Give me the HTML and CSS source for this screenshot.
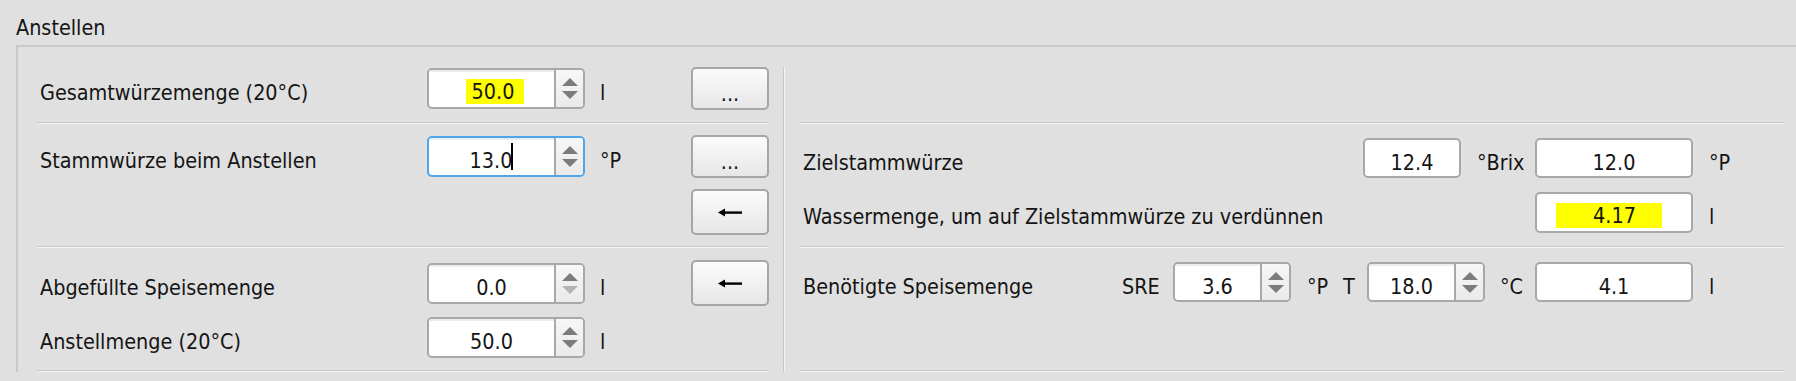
FILE: index.html
```html
<!DOCTYPE html>
<html lang="de">
<head>
    <meta charset="UTF-8">
    <title>Anstellen</title>
    <link rel="stylesheet" href="styles.css">
</head>
<body>

    <div class="title">Anstellen</div>

    <div class="group">
        <!-- left column -->
        <div class="left">
            <div class="sec-a">
                <div class="row">
                    <span class="label">Gesamtwürzemenge (20°C)</span>
                    <div class="spin">
                        <span class="val"><span class="hl">50.0</span></span>
                        <span class="arrows"><i class="up"></i><i class="down"></i></span>
                    </div>
                    <span class="unit">l</span>
                    <button class="btn dots">...</button>
                </div>
            </div>
            <div class="sep"></div>

            <div class="sec-b">
                <div class="row">
                    <span class="label">Stammwürze beim Anstellen</span>
                    <div class="spin focus">
                        <span class="val">13.0<span class="caret"></span></span>
                        <span class="arrows"><i class="up"></i><i class="down"></i></span>
                    </div>
                    <span class="unit">°P</span>
                    <button class="btn dots">...</button>
                </div>
                <div class="row tall">
                    <span></span><span></span><span></span>
                    <button class="btn tall">
                        <svg width="24" height="9" viewBox="0 0 24 9"><polygon points="0,4.5 7,0.5 7,8.5" fill="#000"/><rect x="6" y="3.4" width="18" height="2.4" fill="#000"/></svg>
                    </button>
                </div>
            </div>
            <div class="sep"></div>

            <div class="sec-c">
                <div class="row tall">
                    <span class="label">Abgefüllte Speisemenge</span>
                    <div class="spin">
                        <span class="val">0.0</span>
                        <span class="arrows"><i class="up"></i><i class="down off"></i></span>
                    </div>
                    <span class="unit">l</span>
                    <button class="btn tall">
                        <svg width="24" height="9" viewBox="0 0 24 9"><polygon points="0,4.5 7,0.5 7,8.5" fill="#000"/><rect x="6" y="3.4" width="18" height="2.4" fill="#000"/></svg>
                    </button>
                </div>
                <div class="row short">
                    <span class="label">Anstellmenge (20°C)</span>
                    <div class="spin">
                        <span class="val">50.0</span>
                        <span class="arrows"><i class="up"></i><i class="down"></i></span>
                    </div>
                    <span class="unit">l</span>
                </div>
            </div>
            <div class="sep"></div>
        </div>

        <div class="vline"></div>

        <!-- right column -->
        <div class="right">
            <div class="r-a"></div>
            <div class="sep"></div>

            <div class="r-b">
                <div class="rrow">
                    <span class="rlabel">Zielstammwürze</span>
                    <div class="box w98">12.4</div>
                    <span class="runit u-brix">°Brix</span>
                    <div class="box w158">12.0</div>
                    <span class="runit u-end">°P</span>
                </div>
                <div class="rrow h41">
                    <span class="rlabel">Wassermenge, um auf Zielstammwürze zu verdünnen</span>
                    <div class="box w158 h41"><span class="hl hl-wide">4.17</span></div>
                    <span class="runit u-end">l</span>
                </div>
            </div>
            <div class="sep"></div>

            <div class="r-c">
                <div class="rrow">
                    <span class="rlabel">Benötigte Speisemenge</span>
                    <span class="runit u-sre">SRE</span>
                    <div class="spin w118">
                        <span class="val">3.6</span>
                        <span class="arrows"><i class="up"></i><i class="down"></i></span>
                    </div>
                    <span class="runit u-p">°P</span>
                    <span class="runit u-t">T</span>
                    <div class="spin w118">
                        <span class="val">18.0</span>
                        <span class="arrows"><i class="up"></i><i class="down"></i></span>
                    </div>
                    <span class="runit u-c">°C</span>
                    <div class="box w158">4.1</div>
                    <span class="runit u-end">l</span>
                </div>
            </div>
            <div class="sep"></div>
        </div>
    </div>

</body>
</html>
```

FILE: styles.css
```css
body {
    margin: 0;
    width: 1796px;
    height: 381px;
    overflow: hidden;
    background-color: #e0e0e0;
    font-family: "DejaVu Sans Condensed", "DejaVu Sans", sans-serif;
    font-size: 21.4px;
    color: #141414;
}

.title {
    height: 29px;
    padding: 16px 0 0 16px;
    line-height: 24px;
}

/* Group box */
.group {
    display: flex;
    margin-left: 16px;
    border-top: 2px solid #cacaca;
    border-left: 2px solid #cacaca;
}

.left {
    width: 732px;
    padding-left: 19px;
}

.sec-a {
    padding: 20px 0 12px;
}

.sec-b,
.sec-c {
    display: flex;
    flex-direction: column;
    gap: 11px;
    padding: 11px 0;
}

.sec-c {
    padding: 12px 0;
}

.row {
    display: grid;
    grid-template-columns: 390px 158px 106px 78px;
    align-items: center;
    height: 43px;
}

.row.tall {
    height: 46px;
}

.row.short {
    height: 41px;
}

/* Qt text sits a little below the middle of its row */
.label,
.rlabel,
.unit,
.runit {
    padding-top: 8px;
    white-space: nowrap;
}

.label,
.rlabel {
    padding-left: 3px;
}

.unit {
    padding-left: 15px;
}

.sep {
    border-top: 1px solid #c6c6c6;
    border-bottom: 1px solid #f4f4f4;
}

.vline {
    width: 1px;
    margin: 20px 0 0 14px;
    background: #c6c6c6;
    box-shadow: 1px 0 0 #f4f4f4;
}

.right {
    width: 985px;
    padding-left: 16px;
}

.r-a {
    height: 75px;
}

.r-b {
    display: flex;
    flex-direction: column;
    gap: 14px;
    padding: 14px 0 13px;
}

.r-c {
    height: 122px;
    box-sizing: border-box;
    padding-top: 14px;
}

.rrow {
    display: flex;
    align-items: center;
    height: 40px;
}

.rrow.h41 {
    height: 41px;
}

.rlabel {
    flex: 1;
}

.runit {
    box-sizing: border-box;
    padding-left: 16px;
}

.u-brix { width: 74px; }
.u-end { width: 92px; }
.u-sre { width: 51px; padding-left: 0; }
.u-p { width: 52px; }
.u-t { width: 24px; padding-left: 0; }
.u-c { width: 50px; padding-left: 15px; }

/* Spin boxes */
.spin {
    display: flex;
    box-sizing: border-box;
    height: 41px;
    border: 2px solid #a8a8a8;
    border-radius: 5px;
    background: #fff;
    overflow: hidden;
}

.spin.w118 {
    width: 118px;
    height: 40px;
}

.spin.focus {
    border-color: #4ea6ec;
}

.spin .val {
    flex: 1;
    display: flex;
    align-items: center;
    justify-content: center;
    padding-top: 8px;
    box-shadow: inset 0 2px 0 #ececec;
}

.spin .arrows {
    display: flex;
    flex-direction: column;
    align-items: center;
    justify-content: center;
    gap: 5px;
    width: 27px;
    border-left: 2px solid #a8a8a8;
    background: linear-gradient(#f7f7f7, #eaeaea);
}

.up {
    border-left: 8px solid transparent;
    border-right: 8px solid transparent;
    border-bottom: 8px solid #7c7c7c;
}

.down {
    border-left: 8px solid transparent;
    border-right: 8px solid transparent;
    border-top: 8px solid #7c7c7c;
}

.down.off {
    border-top-color: #b4b4b4;
}

.caret {
    display: inline-block;
    width: 2px;
    height: 27px;
    margin: -8px 0 0 -1px;
    background: #000;
}

/* Read-only fields */
.box {
    display: flex;
    align-items: center;
    justify-content: center;
    box-sizing: border-box;
    height: 40px;
    padding-top: 8px;
    border: 2px solid #a8a8a8;
    border-radius: 5px;
    background: #fff;
}

.box.h41 { height: 41px; }
.w98 { width: 98px; }
.w158 { width: 158px; }

.hl {
    margin: -3px 0 0 7px;
    padding: 0 10px 0 6px;
    background: #ffff00;
}

.hl-wide {
    margin-left: -10px;
    padding: 0 26px 0 37px;
}

/* Push buttons */
.btn {
    display: flex;
    align-items: center;
    justify-content: center;
    box-sizing: border-box;
    width: 78px;
    height: 43px;
    padding: 0;
    border: 2px solid #a6a6a6;
    border-radius: 5px;
    background: linear-gradient(#fbfbfb, #e7e7e7);
    font: inherit;
    color: #141414;
}

.btn.dots {
    padding-top: 10px;
}

.btn.tall {
    height: 46px;
}
```
